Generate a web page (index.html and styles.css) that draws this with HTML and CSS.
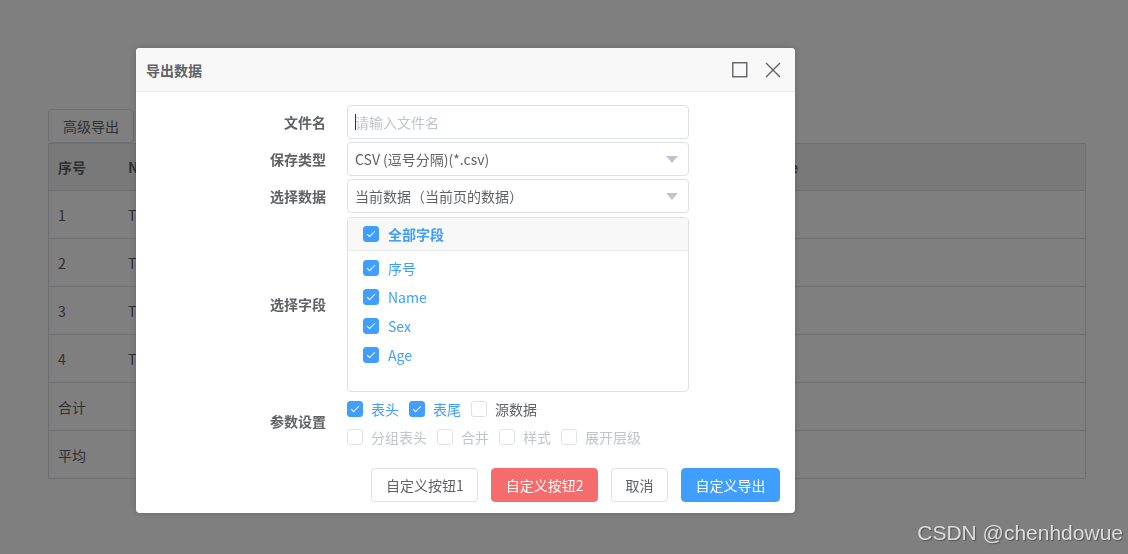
FILE: index.html
```html
<!DOCTYPE html>
<html lang="zh-CN">
<head>
    <meta charset="UTF-8">
    <meta name="viewport" content="width=device-width, initial-scale=1.0">
    <title>导出数据</title>
    <link rel="stylesheet" href="styles.css">
</head>
<body>
    <div class="page">
        <button class="btn-plain" type="button">高级导出</button>
        <div class="table">
            <div class="tr th">
                <div class="td c1">序号</div>
                <div class="td c2">Name</div>
                <div class="td c3">Sex</div>
                <div class="td c4">Age</div>
            </div>
            <div class="tr"><div class="td c1">1</div><div class="td c2">Test1</div><div class="td c3">Man</div><div class="td c4">28</div></div>
            <div class="tr"><div class="td c1">2</div><div class="td c2">Test2</div><div class="td c3">Women</div><div class="td c4">22</div></div>
            <div class="tr"><div class="td c1">3</div><div class="td c2">Test3</div><div class="td c3">Man</div><div class="td c4">32</div></div>
            <div class="tr"><div class="td c1">4</div><div class="td c2">Test4</div><div class="td c3">Women</div><div class="td c4">24</div></div>
            <div class="tr"><div class="td c1">合计</div><div class="td c2"></div><div class="td c3"></div><div class="td c4"></div></div>
            <div class="tr"><div class="td c1">平均</div><div class="td c2"></div><div class="td c3"></div><div class="td c4"></div></div>
        </div>
    </div>

    <div class="mask">
        <div class="dialog">
            <div class="dialog-header">
                <span class="dialog-title">导出数据</span>
                <span class="dialog-btns">
                    <svg width="16" height="16" viewBox="0 0 16 16"><rect x="0.75" y="0.75" width="14" height="14" fill="none" stroke="#606266" stroke-width="1.4"/></svg>
                    <svg width="16" height="16" viewBox="0 0 16 16"><path d="M1 1 L15 15 M15 1 L1 15" stroke="#606266" stroke-width="1.4" fill="none"/></svg>
                </span>
            </div>

            <form class="dialog-body">
                <label class="form-label">文件名</label>
                <div class="input-wrap"><input class="input" type="text" placeholder="请输入文件名"><span class="caret"></span></div>

                <label class="form-label">保存类型</label>
                <div class="select"><span>CSV (逗号分隔)(*.csv)</span></div>

                <label class="form-label">选择数据</label>
                <div class="select"><span>当前数据（当前页的数据）</span></div>

                <label class="form-label">选择字段</label>
                <div class="fields">
                    <div class="fields-head">
                        <span class="cb checked"></span><span class="cb-text bold">全部字段</span>
                    </div>
                    <div class="fields-list">
                        <div class="field-item"><span class="cb checked"></span><span class="cb-text">序号</span></div>
                        <div class="field-item"><span class="cb checked"></span><span class="cb-text">Name</span></div>
                        <div class="field-item"><span class="cb checked"></span><span class="cb-text">Sex</span></div>
                        <div class="field-item"><span class="cb checked"></span><span class="cb-text">Age</span></div>
                    </div>
                </div>

                <label class="form-label label-params">参数设置</label>
                <div class="params">
                    <div class="param-row">
                        <span class="opt"><span class="cb checked"></span><span class="cb-text">表头</span></span>
                        <span class="opt"><span class="cb checked"></span><span class="cb-text">表尾</span></span>
                        <span class="opt"><span class="cb"></span><span class="cb-text plain">源数据</span></span>
                    </div>
                    <div class="param-row">
                        <span class="opt"><span class="cb disabled"></span><span class="cb-text muted">分组表头</span></span>
                        <span class="opt"><span class="cb disabled"></span><span class="cb-text muted">合并</span></span>
                        <span class="opt"><span class="cb disabled"></span><span class="cb-text muted">样式</span></span>
                        <span class="opt"><span class="cb disabled"></span><span class="cb-text muted">展开层级</span></span>
                    </div>
                </div>
            </form>

            <div class="dialog-footer">
                <button class="btn" type="button">自定义按钮1</button>
                <button class="btn btn-danger" type="button">自定义按钮2</button>
                <button class="btn" type="button">取消</button>
                <button class="btn btn-primary" type="button">自定义导出</button>
            </div>
        </div>
    </div>

    <div class="watermark">CSDN @chenhdowue</div>
</body>
</html>
```

FILE: styles.css
```css
body {
    margin: 0;
    padding: 0;
    background-color: #fff;
    font-family: "Noto Sans CJK SC", "Noto Sans", sans-serif;
    font-size: 14px;
    color: #606266;
    width: 1128px;
    height: 554px;
    overflow: hidden;
}

/* page behind the modal */
.page {
    padding: 109px 0 0 48px;
    width: 1038px;
}

.btn-plain {
    display: block;
    height: 34px;
    width: 86px;
    padding: 0;
    background-color: #fff;
    border: 1px solid #dcdfe6;
    border-radius: 4px;
    font-family: inherit;
    font-size: 14px;
    color: #606266;
}

.table {
    border: 1px solid #dcdfe6;
    border-bottom: none;
}

.tr {
    display: flex;
    height: 47px;
    border-bottom: 1px solid #dcdfe6;
}

.th {
    height: 46px;
    background-color: #f3f3f4;
    font-weight: bold;
}

.td {
    box-sizing: border-box;
    padding-left: 9px;
    display: flex;
    align-items: center;
}

.c1 { width: 70px; }
.c2 { width: 322px; }
.c3 { width: 323px; }
.c4 { flex: 1; }

/* modal */
.mask {
    position: fixed;
    top: 0;
    left: 0;
    right: 0;
    bottom: 0;
    background-color: rgba(0, 0, 0, 0.5);
    padding: 48px 0 0 136px;
}

.dialog {
    width: 659px;
    background-color: #fff;
    border-radius: 4px;
    box-shadow: 0 0 6px rgba(0, 0, 0, 0.2);
    overflow: hidden;
}

.dialog-header {
    height: 43px;
    background-color: #f8f8f8;
    border-bottom: 1px solid #e8eaec;
    display: flex;
    align-items: center;
    justify-content: space-between;
    padding: 0 14px 0 10px;
}

.dialog-title {
    font-weight: bold;
    font-size: 14px;
    color: #606266;
}

.dialog-btns {
    display: flex;
    gap: 17px;
    padding-top: 1px;
}

.dialog-body {
    display: grid;
    grid-template-columns: 190px 342px;
    column-gap: 21px;
    row-gap: 3px;
    padding-top: 13px;
    margin: 0;
}

.form-label {
    text-align: right;
    align-self: center;
    font-weight: bold;
    color: #606266;
}

.label-params {
    padding-bottom: 4px;
}

.input-wrap {
    position: relative;
}

.input {
    display: block;
    width: 100%;
    height: 34px;
    box-sizing: border-box;
    border: 1px solid #dcdfe6;
    border-radius: 4px;
    padding: 0 7px;
    font-family: inherit;
    font-size: 14px;
    color: #606266;
    outline: none;
}

.input::placeholder {
    color: #c0c4cc;
}

.caret {
    position: absolute;
    left: 8px;
    top: 9px;
    width: 1px;
    height: 16px;
    background-color: #303133;
}

.select {
    position: relative;
    height: 34px;
    box-sizing: border-box;
    border: 1px solid #dcdfe6;
    border-radius: 4px;
    padding: 0 7px;
    display: flex;
    align-items: center;
    color: #606266;
}

.select::after {
    content: "";
    position: absolute;
    right: 10px;
    top: 13px;
    border-left: 6px solid transparent;
    border-right: 6px solid transparent;
    border-top: 7px solid #c0c4cc;
}

.fields {
    margin-top: 1px;
    height: 175px;
    box-sizing: border-box;
    border: 1px solid #dcdfe6;
    border-radius: 4px;
    overflow: hidden;
}

.fields-head {
    height: 32px;
    background-color: #f8f8f9;
    border-bottom: 1px solid #e8eaec;
    display: flex;
    align-items: center;
    padding-left: 15px;
}

.fields-list {
    padding-top: 2px;
}

.field-item {
    height: 29px;
    display: flex;
    align-items: center;
    padding-left: 15px;
}

.fields .cb-text {
    margin-left: 9px;
}

/* checkbox */
.cb {
    position: relative;
    display: inline-block;
    width: 16px;
    height: 16px;
    box-sizing: border-box;
    border: 1px solid #dcdfe6;
    border-radius: 3px;
    background-color: #fff;
    flex-shrink: 0;
}

.cb.checked {
    background-color: #409eff;
    border-color: #409eff;
}

.cb.checked::after {
    content: "";
    position: absolute;
    left: 5px;
    top: 2px;
    width: 3px;
    height: 7px;
    border-right: 1.5px solid #fff;
    border-bottom: 1.5px solid #fff;
    transform: rotate(45deg);
}

.cb.disabled {
    background-color: #fff;
    border-color: #dfe2e8;
}

.cb-text {
    margin-left: 8px;
    color: #409eff;
}

.cb-text.bold {
    font-weight: bold;
}

.cb-text.plain {
    color: #606266;
}

.cb-text.muted {
    color: #c0c4cc;
}

.param-row {
    height: 28px;
    display: flex;
    align-items: center;
    gap: 10px;
}

.opt {
    display: flex;
    align-items: center;
}

.dialog-footer {
    display: flex;
    justify-content: flex-end;
    gap: 13px;
    padding: 17px 15px 11px 0;
}

.btn {
    height: 34px;
    padding: 0 13.5px;
    background-color: #fff;
    border: 1px solid #dcdfe6;
    border-radius: 4px;
    font-family: inherit;
    font-size: 14px;
    color: #606266;
}

.btn-danger {
    background-color: #f56c6c;
    border-color: #f56c6c;
    color: #fff;
}

.btn-primary {
    background-color: #409eff;
    border-color: #409eff;
    color: #fff;
}

.watermark {
    position: fixed;
    right: 5px;
    bottom: 9px;
    font-family: "Liberation Sans", Arial, sans-serif;
    font-size: 21px;
    color: #dcdcdc;
    text-shadow: 1px 1px 1px rgba(0, 0, 0, 0.35);
}
```
